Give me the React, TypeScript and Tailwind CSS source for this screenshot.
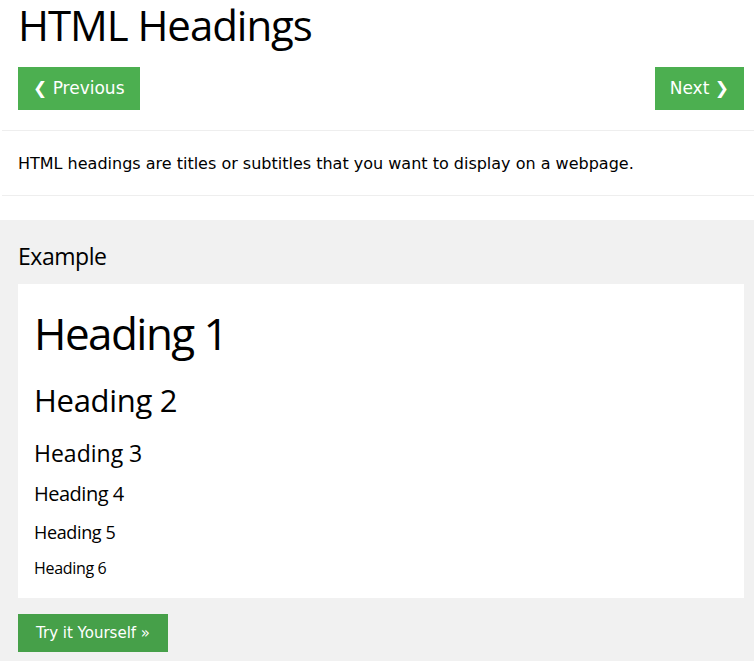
import React from 'react';

const headingFont = { fontFamily: '"Open Sans", "Noto Sans", sans-serif' };

const headings = [
  { text: 'Heading 1', cls: 'text-[44px] leading-[54px] tracking-[-0.035em]' },
  { text: 'Heading 2', cls: 'mt-[21px] text-[31px] leading-[38px] tracking-[-0.01em]' },
  { text: 'Heading 3', cls: 'mt-[20px] text-[23px] leading-[28px]' },
  { text: 'Heading 4', cls: 'mt-[15px] text-[20px] leading-[24px] tracking-[-0.025em]' },
  { text: 'Heading 5', cls: 'mt-[15px] text-[18px] leading-[22px] tracking-[-0.02em]' },
  { text: 'Heading 6', cls: 'mt-[15px] text-[16px] leading-[20px] tracking-[-0.02em]' },
];

export default function App() {
  return (
    <div className="min-h-[661px] bg-white text-black font-['DejaVu_Sans',Verdana,sans-serif]">
      {/* Title + nav */}
      <div className="pl-[18px] pr-[10px]">
        <h1 className="font-['Open_Sans','Noto_Sans',sans-serif] text-[42px] leading-[50px] font-normal tracking-[-0.025em]">
          HTML Headings
        </h1>
        <div className="mt-[17px] flex items-center justify-between">
          <a className="flex h-[43px] items-center bg-[#4CAF50] px-[15px] text-[17px] text-white">
            ❮ Previous
          </a>
          <a className="flex h-[43px] items-center bg-[#4CAF50] px-[15px] text-[17px] text-white">
            Next ❯
          </a>
        </div>
      </div>

      <hr className="mt-[20px] ml-[2px] border-0 border-t border-[#eeeeee]" />
      <p className="mt-[22px] mb-[20px] pl-[18px] text-[16px] leading-[22px]">
        HTML headings are titles or subtitles that you want to display on a webpage.
      </p>
      <hr className="ml-[2px] border-0 border-t border-[#eeeeee]" />

      {/* Example */}
      <div className="mt-[24px] bg-[#f1f1f1] pl-[18px] pr-[10px] pt-[21px] pb-[9px]">
        <h2 style={headingFont} className="text-[23px] leading-[30px] font-normal tracking-[-0.02em]">
          Example
        </h2>
        <div className="mt-[13px] bg-white pl-[16px] pt-[22px] pb-[20px]">
          {headings.map((h) => (
            <div key={h.text} style={headingFont} className={h.cls}>
              {h.text}
            </div>
          ))}
        </div>
        <a className="mt-[16px] inline-flex h-[38px] items-center bg-[#46a049] px-[18px] text-[15px] text-white">
          Try it Yourself »
        </a>
      </div>
    </div>
  );
}
